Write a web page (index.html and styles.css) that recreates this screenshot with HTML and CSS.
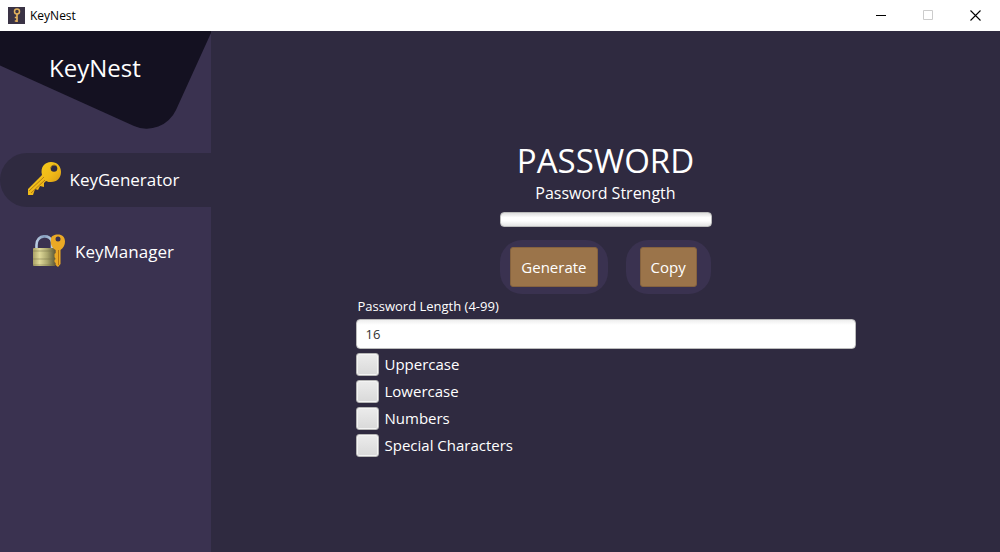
FILE: index.html
```html
<!DOCTYPE html>
<html lang="en">
<head>
<meta charset="utf-8">
<title>KeyNest</title>
<link rel="stylesheet" href="styles.css">
</head>
<body>
<header class="titlebar">
  <svg class="app-icon" viewBox="0 0 17 17" aria-hidden="true">
    <rect width="17" height="17" fill="#3a3345"/>
    <circle cx="9" cy="4.6" r="2.5" fill="none" stroke="#e3b35e" stroke-width="1.5"/>
    <path d="M9 7v8M9 10.5H6.8M9 14H6.8" fill="none" stroke="#e3b35e" stroke-width="1.7"/>
  </svg>
  <span class="window-title">KeyNest</span>
  <div class="window-controls">
    <button class="win-btn" aria-label="Minimize"><svg viewBox="0 0 11 11"><path d="M0 5.5h10" stroke="#000"/></svg></button>
    <button class="win-btn" aria-label="Maximize" disabled><svg viewBox="0 0 11 11"><path d="M.5.5h9v9h-9z" fill="none" stroke="#ccc"/></svg></button>
    <button class="win-btn" aria-label="Close"><svg viewBox="0 0 11 11"><path d="M.5.5l10 10M10.500.5l-10 10" stroke="#000" stroke-width="1.1"/></svg></button>
  </div>
</header>
<div class="app">
  <aside class="sidebar">
    <div class="brand">
      <svg class="brand-shape" viewBox="0 0 211 100" aria-hidden="true"><path d="M0 0H211V2L176 79A32 32 0 0 1 134 95L0 34.500Z" fill="#141121"/></svg>
      <h1 class="brand-name">KeyNest</h1>
    </div>
    <nav class="menu">
      <button class="menu-item active">
        <svg class="menu-icon" viewBox="0 0 36 36" aria-hidden="true">
          <defs><linearGradient id="gold" x1="0" y1="0" x2="1" y2="1"><stop offset="0" stop-color="#f8d41d"/><stop offset=".55" stop-color="#f0b918"/><stop offset="1" stop-color="#c68514"/></linearGradient></defs>
          <path d="M16 14C14 6 19 1 25 1C31 1 35 5 35 11C35 17 31 21 25 21C23 21 22 21 20 20L18 22V26L14 25L12 29L9 28L7 34L2 34V28Z" fill="url(#gold)"/>
          <path d="M3 30L18 16M5 32L19 19" stroke="#b67a13" stroke-width="1" fill="none"/>
          <circle cx="28" cy="7.500" r="3.300" fill="#2f2a40"/>
          <path d="M24.800 7A3.400 3.400 0 0 1 30.500 5" stroke="#967020" fill="none"/>
        </svg>
        <span>KeyGenerator</span>
      </button>
      <button class="menu-item">
        <svg class="menu-icon" viewBox="0 0 36 36" aria-hidden="true">
          <defs>
            <linearGradient id="brass" x1="0" x2="1" y1="0" y2="0"><stop offset="0" stop-color="#aaa265"/><stop offset=".3" stop-color="#dfd999"/><stop offset=".65" stop-color="#aaa66c"/><stop offset="1" stop-color="#625c39"/></linearGradient>
            <linearGradient id="steel" x1="0" x2="1" y1="0" y2="0"><stop offset="0" stop-color="#b9cde1"/><stop offset=".5" stop-color="#839cbd"/><stop offset="1" stop-color="#b9cde1"/></linearGradient>
          </defs>
          <path d="M5.500 17V12C5.500 1 20 1 21 9V16" fill="none" stroke="url(#steel)" stroke-width="2.600"/>
          <path d="M2 16Q2 15 3 15H24V33H3Q2 33 2 32Z" fill="url(#brass)"/>
          <path d="M2 18H23M2 26H23M2 32H23" stroke="#757047" stroke-width=".7" opacity=".7"/>
          <path d="M20 6C20 3 23 1.500 27 1.500C31 1.500 34 4 34 8.500C34 12 32.500 15 29.500 17V31L27 34L24.500 32V30L23.500 29V27L24.500 26L23.500 24V21L24.500 20V17C21 15 19 11 20 6Z" fill="#eaa925"/>
          <path d="M27.500 17V32" stroke="#b87410" stroke-width="1"/>
          <circle cx="27" cy="6" r="2.500" fill="#3a3250"/>
        </svg>
        <span>KeyManager</span>
      </button>
    </nav>
  </aside>
  <main class="content">
    <output class="password">PASSWORD</output>
    <div class="strength-label" id="strength">Password Strength</div>
    <div class="strength-bar" role="progressbar" aria-labelledby="strength" aria-valuenow="0"></div>
    <div class="actions">
      <div class="action generate"><button class="action-btn">Generate</button></div>
      <div class="action copy"><button class="action-btn">Copy</button></div>
    </div>
    <form class="options">
      <label class="length-label" for="length">Password Length (4-99)</label>
      <input class="length-input" id="length" type="text" value="16">
      <label class="option"><input class="check" type="checkbox"><span>Uppercase</span></label>
      <label class="option"><input class="check" type="checkbox"><span>Lowercase</span></label>
      <label class="option"><input class="check" type="checkbox"><span>Numbers</span></label>
      <label class="option"><input class="check" type="checkbox"><span>Special Characters</span></label>
    </form>
  </main>
</div>
</body>
</html>
```
FILE: styles.css
```css
* { box-sizing: border-box; }
body {
  margin: 0;
  min-height: 100vh;
  display: flex;
  flex-direction: column;
  background: #2f2a40;
  color: #fff;
  font-family: "Open Sans", "Noto Sans", sans-serif;
  font-size: 15px;
}
button, input { font: inherit; color: inherit; }
button { border: 0; background: none; padding: 0; }

.titlebar {
  display: flex;
  align-items: center;
  height: 31px;
  padding: 0 1px 0 8px;
  background: #fff;
  color: #000;
}
.app-icon { width: 17px; height: 17px; }
.window-title { margin-left: 5px; font-size: 12px; }
.window-controls { display: flex; margin-left: auto; }
.win-btn { width: 47px; height: 31px; display: flex; align-items: center; justify-content: center; }
.win-btn svg { width: 11px; height: 11px; }

.app { display: flex; flex: 1; }
.sidebar { width: 211px; background: #3a3250; }
.brand { position: relative; height: 122px; }
.brand-shape { display: block; width: 100%; }
.brand-name {
  position: absolute;
  top: 19px;
  left: 49px;
  margin: 0;
  font-size: 24px;
  line-height: 36px;
  font-weight: 400;
}
.menu { display: flex; flex-direction: column; gap: 18px; }
.menu-item {
  display: flex;
  align-items: center;
  justify-content: center;
  gap: 8px;
  height: 54px;
  padding: 0 6px 2px 0;
  border-radius: 27px 0 0 27px;
  font-size: 17px;
}
.menu-item.active { background: #2f2a40; }
.menu-icon { width: 36px; height: 36px; }

.content {
  flex: 1;
  display: flex;
  flex-direction: column;
  align-items: center;
  padding: 107px 20px 20px;
}
.password { font-size: 33px; line-height: 46px; }
.strength-label { font-size: 16px; line-height: 18px; }
.strength-bar {
  width: 212px;
  height: 15px;
  margin-top: 10px;
  border: 1px solid #bbb;
  border-radius: 4px;
  background: linear-gradient(#dedede, #fff 35%, #fff 60%, #e4e4e4);
}
.actions { display: flex; gap: 18px; margin-top: 13px; }
.action {
  display: flex;
  align-items: center;
  justify-content: center;
  height: 54px;
  border-radius: 22px;
  background: #3a3250;
}
.generate { padding: 0 10px; }
.copy { padding: 0 14px; }
.action-btn {
  height: 40px;
  padding: 0 10px;
  border: 1px solid #85623f;
  border-radius: 3px;
  background: #9b744a;
}
.options { display: flex; flex-direction: column; width: 100%; max-width: 500px; gap: 4px; }
.length-label { padding: 3px 0 0 2px; font-size: 13px; line-height: 18px; }
.length-input {
  height: 30px;
  padding: 0 9px;
  border: 1px solid #bbb;
  border-radius: 4px;
  background: linear-gradient(#eee, #fff 5px);
  color: #323232;
  font-size: 13px;
}
.option { display: flex; align-items: center; align-self: flex-start; gap: 6px; line-height: 23px; }
.check {
  appearance: none;
  width: 23px;
  height: 23px;
  margin: 0;
  border: 1px solid #b5b5b5;
  border-radius: 3px;
  background: linear-gradient(#ececec, #d9d9d9);
  box-shadow: inset 0 0 0 1px #f4f4f4;
}
```
